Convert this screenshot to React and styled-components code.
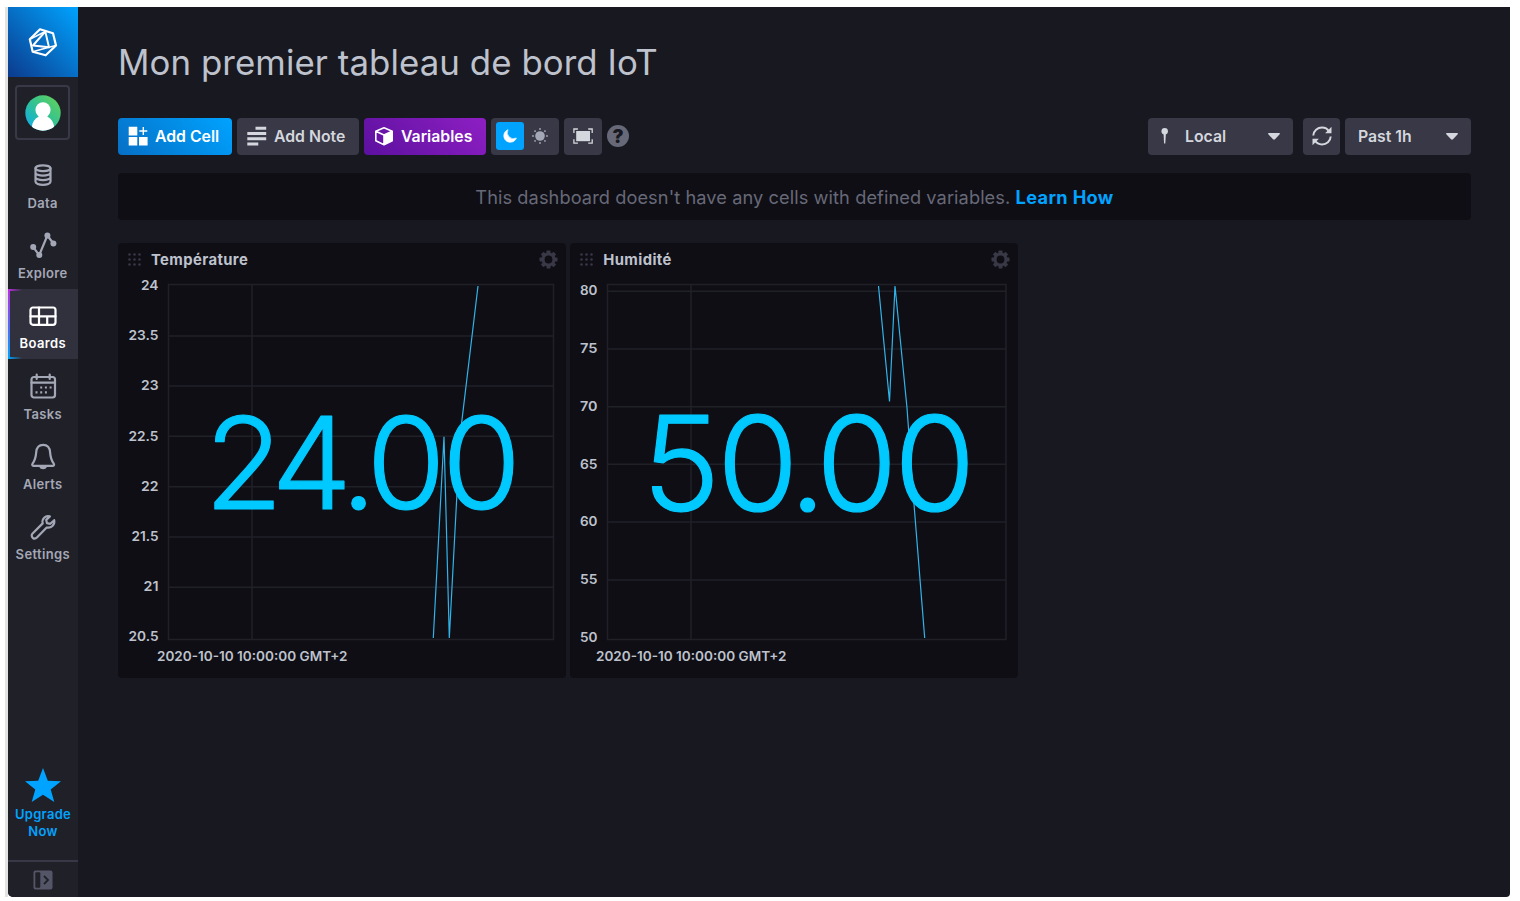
import React from 'react';
import styled, { createGlobalStyle, css } from 'styled-components';

const GlobalStyle = createGlobalStyle`
  * { box-sizing: border-box; }
  body { margin: 0; background: #fff; font-family: Inter, Roboto, "Liberation Sans", sans-serif; }
  svg { display: block; flex: none; }
`;

const Page = styled.div`
  height: 901px;
  padding: 7px 10px 4px 5px;
  overflow: hidden;
`;

const Frame = styled.div`
  display: flex;
  height: 890px;
  border-left: 3px solid #b4b4b6;
  border-image: linear-gradient(90deg, #e3e3e1, #c4c4c2 60%, #77777b) 1;
`;

const Shell = styled.div`
  display: flex;
  flex: 1;
  background: #181820;
  border-radius: 0 0 4px 5px;
  overflow: hidden;
`;

const Sidebar = styled.nav`
  display: flex;
  flex-direction: column;
  align-items: center;
  width: 70px;
  background: #202028;
`;

const Logo = styled.div`
  display: flex;
  align-items: center;
  justify-content: center;
  width: 70px;
  height: 70px;
  color: #fff;
  background: linear-gradient(45deg, #0b3a8d 0%, #066fc5 50%, #00a3ff 100%);
`;

const AvatarBox = styled.div`
  display: flex;
  align-items: center;
  justify-content: center;
  width: 55px;
  height: 55px;
  margin: 8px 1px 8px 0;
  border: 2px solid #383846;
  border-radius: 4px;
`;

const NavItem = styled.a`
  position: relative;
  display: flex;
  flex-direction: column;
  align-items: center;
  width: 70px;
  height: 70.35px;
  padding-top: 13px;
  padding-right: 0.5px;
  color: ${p => (p.$active ? '#fff' : '#a4a8b6')};
  background: ${p => (p.$active ? '#31313d' : 'transparent')};
  ${p => p.$active && css`
    &::before, &::after {
      content: '';
      position: absolute;
      left: 0;
      width: 14px;
      height: 2.5px;
    }
    &::before { top: 0; background: linear-gradient(90deg, #be2ee4, transparent); }
    &::after { bottom: 0; background: linear-gradient(90deg, #00a3ff, transparent); }
  `}
`;

const ActiveEdge = styled.span`
  position: absolute;
  left: 0;
  top: 0;
  width: 2px;
  height: 100%;
  background: linear-gradient(180deg, #be2ee4, #5a67f5 50%, #00a3ff);
`;

const NavLabel = styled.span`
  margin-top: 5.5px;
  font-size: 13px;
  font-weight: 600;
  line-height: 16px;
  letter-spacing: 0.35px;
`;

const Upgrade = styled.div`
  display: flex;
  flex-direction: column;
  align-items: center;
  gap: 2px;
  margin: auto 0 20px 0;
  color: #00a3ff;
  font-size: 13px;
  font-weight: 600;
  line-height: 17px;
  letter-spacing: 0.3px;
  text-align: center;
`;

const Collapse = styled.div`
  display: flex;
  justify-content: center;
  width: 70px;
  height: 37px;
  padding-top: 8px;
  padding-right: 1px;
  border-top: 2px solid #383846;
`;

const Main = styled.main`
  flex: 1;
  padding: 0 39px 0 40px;
`;

const Title = styled.h1`
  margin: 0;
  padding-top: 33px;
  height: 110.5px;
  color: #bec2cc;
  font-size: 34.8px;
  font-weight: 400;
  line-height: 44px;
  letter-spacing: 0.08px;
  white-space: nowrap;
`;

const Toolbar = styled.div`
  display: flex;
  align-items: center;
  gap: 5px;
  height: 37.5px;
`;

const Spacer = styled.div`
  flex: 1;
`;

const fills = {
  primary: 'linear-gradient(45deg, #066fc5, #00a3ff)',
  secondary: 'linear-gradient(45deg, #5c109f, #8e1fc3)',
  plain: '#383846',
};

const Button = styled.button`
  display: flex;
  align-items: center;
  width: ${p => p.$w}px;
  height: 37.5px;
  margin: 0 ${p => p.$after || 0}px 0 0;
  padding: 0 0 0 10px;
  border: 0;
  border-radius: 4px;
  color: ${p => (p.$kind ? '#fff' : '#d4d7dd')};
  background: ${p => fills[p.$kind || 'plain']};
  font: 600 15.8px/37px Inter, Roboto, "Liberation Sans", sans-serif;
  letter-spacing: ${p => p.$ls || 0}px;
  white-space: nowrap;
`;

const ButtonText = styled.span`
  margin-left: ${p => p.$gap}px;
`;

const Caret = styled.svg.attrs({ width: 12, height: 7, viewBox: '0 0 12 7' })`
  margin-left: auto;
  margin-right: 13px;
  fill: #d4d7dd;
`;

const Toggle = styled.div`
  display: flex;
  align-items: center;
  width: 68px;
  height: 37.5px;
  padding: 5px;
  gap: 2px;
  border-radius: 4px;
  background: #383846;
`;

const ToggleOption = styled.div`
  display: flex;
  align-items: center;
  justify-content: center;
  width: 28px;
  height: 28px;
  border-radius: 3px;
  background: ${p => (p.$active ? '#00a3ff' : 'transparent')};
`;

const IconButton = styled(Button)`
  justify-content: center;
  padding: 0;
`;

const Help = styled.div`
  width: 22px;
  height: 22px;
  border-radius: 50%;
  background: #676978;
  color: #181820;
  font-size: 18.5px;
  font-weight: 900;
  line-height: 22px;
  text-align: center;
`;

const Notice = styled.div`
  height: 47px;
  margin-top: 18px;
  border-radius: 4px;
  background: #0f0e15;
  color: #676978;
  font-size: 18.2px;
  line-height: 48px;
  letter-spacing: 0.09px;
  text-align: center;
  white-space: nowrap;
`;

const NoticeLink = styled.a`
  color: #00a3ff;
  font-weight: 700;
  letter-spacing: 0.35px;
`;

const Grid = styled.div`
  display: flex;
  gap: 4.7px;
  margin-top: 23px;
`;

const Cell = styled.section`
  width: 447.6px;
  height: 435px;
  border-radius: 4px;
  background: #0f0e15;
`;

const CellHeader = styled.header`
  display: flex;
  align-items: center;
  height: 33.5px;
  padding: 0 7.5px 0 10px;
`;

const CellName = styled.h2`
  flex: 1;
  margin: 1px 0 0 10px;
  color: #bec2cc;
  font-size: 14.8px;
  font-weight: 700;
  letter-spacing: 0.4px;
`;

const ChartArea = styled.div`
  padding-top: 0.5px;
`;

const Axis = styled.text`
  fill: #bec2cc;
  font: 600 13px Inter, Roboto, "Liberation Sans", sans-serif;
`;

const Stat = styled.text`
  fill: #00c9ff;
  stroke: #00c9ff;
  stroke-width: 1.2px;
  stroke-linejoin: round;
  font: 300 ${p => p.$size}px Inter, Roboto, sans-serif;
`;

const LogoIcon = () => (
  <svg width="30" height="30" viewBox="0 0 30 30" fill="none" stroke="#fff" strokeWidth="2.200" strokeLinejoin="round">
    <path d="M12 2.300L25 6.300 28 18.500 17.700 28.300 4.700 24.800 1.800 12.300z" />
    <path d="M17.300 4.500L5 18.500 21 20.300z" strokeWidth="1.900" />
    <path d="M1.800 12.300L17.300 4.500M21 20.300l7-1.800M21 20.300L4.700 24.800" strokeWidth="1.500" />
  </svg>
);

const AvatarIcon = () => (
  <svg width="36" height="36" viewBox="0 0 36 36">
    <defs>
      <linearGradient id="avatar" x1="0" y1="1" x2="1" y2="0">
        <stop offset="0.1" stopColor="#12b0e2" />
        <stop offset="0.5" stopColor="#32c292" />
        <stop offset="0.9" stopColor="#5fd060" />
      </linearGradient>
      <clipPath id="avatarClip"><circle cx="18" cy="18" r="17.7" /></clipPath>
    </defs>
    <circle cx="18" cy="18" r="17.7" fill="url(#avatar)" />
    <g fill="#fff" clipPath="url(#avatarClip)">
      <circle cx="18" cy="14.8" r="7.6" />
      <path d="M13.500 19.500h9v2.200c4 1.800 6 5.500 6.500 9.300v5H7v-5c.5-3.800 2.500-7.500 6.500-9.300z" />
    </g>
  </svg>
);

const line = { fill: 'none', stroke: 'currentColor', strokeWidth: 2.2, strokeLinecap: 'round', strokeLinejoin: 'round' };

const DataIcon = () => (
  <svg width="28" height="28" viewBox="0 0 28 28" {...line}>
    <ellipse cx="14" cy="7.200" rx="7.500" ry="2.900" />
    <path d="M6.500 7.200v13.600c0 1.600 3.400 3 7.500 3s7.500-1.400 7.500-3V7.200M6.500 11.700c0 1.600 3.400 2.900 7.500 2.900s7.500-1.300 7.500-2.900M6.500 16.200c0 1.600 3.400 2.900 7.500 2.900s7.500-1.300 7.500-2.900" />
  </svg>
);

const ExploreIcon = () => (
  <svg width="28" height="28" viewBox="0 0 28 28" {...line}>
    <path d="M4.200 16.200l6 8L18.400 4.500l6 8" />
    <g fill="currentColor" stroke="none">
      <circle cx="4.200" cy="16" r="3" /><circle cx="10.300" cy="24" r="3" />
      <circle cx="18.400" cy="4.500" r="3" /><circle cx="24.400" cy="12.500" r="3" />
    </g>
  </svg>
);

const BoardsIcon = () => (
  <svg width="28" height="28" viewBox="0 0 28 28" {...line}>
    <rect x="1.500" y="5.500" width="25" height="17.300" rx="2.500" />
    <path d="M1.500 14.300h25M10 5.700v8.600M10 14.300V23M18.200 14.300V23" />
  </svg>
);

const TasksIcon = () => (
  <svg width="28" height="28" viewBox="0 0 28 28" {...line}>
    <rect x="2.500" y="5" width="23.500" height="20.500" rx="2.500" />
    <path d="M2.500 10.700H26M7.700 2.500v4.500M20.700 2.500v4.500" />
    <path strokeLinecap="butt" d="M11.200 15.500h12M6.500 20.300h12" strokeDasharray="2 2.700" />
  </svg>
);

const AlertsIcon = () => (
  <svg width="28" height="28" viewBox="0 0 28 28" {...line}>
    <path d="M14.200 2.800c-4.700 0-6.700 3.400-7 7.500-.4 5.600-1 7.600-3.500 11-.9 1.300-.6 2.500.8 2.500h19.300c1.400 0 1.700-1.200.8-2.500-2.500-3.400-3.100-5.400-3.500-11-.3-4.100-2.300-7.500-6.900-7.500z" />
    <path d="M11.500 25h5.200c-.5 1.500-4.700 1.500-5.200 0z" />
  </svg>
);

const SettingsIcon = () => (
  <svg width="28" height="28" viewBox="0 0 28 28" {...line}>
    <path d="M20.900 3.400c-4.600-1.200-8.300 2.300-7.200 7L3.600 20.500c-1.500 1.500-.9 3.600.3 4.500 1.300.9 2.900.6 4-.5l9.800-10c4.400.9 8.400-2.500 7.500-7.300l-3.900 3.600-3.300-.6-.8-3.300z" />
  </svg>
);

const GearIcon = () => (
  <svg width="19" height="19" viewBox="-9.500 -9.500 19 19">
    <g fill="#383846">
      {[0, 45, 90, 135].map(a => <rect key={a} x="-2" y="-9" width="4" height="18" rx="0.800" transform={`rotate(${a})`} />)}
      <circle r="7" />
    </g>
    <circle r="3.900" fill="#0f0e15" />
  </svg>
);

const Grip = () => (
  <svg width="13" height="14" viewBox="0 0 13 14" fill="#383846">
    {[1.500, 6.500, 11.500].map(x => [1.500, 6.500, 11.500].map(y => <circle key={`${x}-${y}`} cx={x} cy={y} r="1.300" />))}
  </svg>
);

const navItems = [
  { label: 'Data', Icon: DataIcon },
  { label: 'Explore', Icon: ExploreIcon },
  { label: 'Boards', Icon: BoardsIcon, active: true },
  { label: 'Tasks', Icon: TasksIcon },
  { label: 'Alerts', Icon: AlertsIcon },
  { label: 'Settings', Icon: SettingsIcon },
];

const charts = [
  {
    name: 'Température',
    left: 50.5, right: 435.500, tick: 134, stampX: 39,
    rows: [[null, '24', 12.500], [59, '23.5', 63], [109, '23', 113], [159.300, '22.5', 163.500], [209.700, '22', 213.500], [260, '21.5', 263.800], [310.200, '21', 314], [null, '20.5', 364]],
    points: '315.3,361 326,159.700 331.300,361 342,159.500 360,9',
    stat: [['2', 86.500], ['4', 153.500], ['.', 222.500], ['0', 248.500], ['0', 324]],
    size: 128, base: 231.800,
  },
  {
    name: 'Humidité',
    left: 37.5, right: 436, tick: 121, stampX: 26,
    rows: [[14.300, '80', 18.300], [72, '75', 76], [129.700, '70', 133.700], [187.300, '65', 191.700], [245, '60', 249.300], [303, '55', 306.500], [null, '50', 364.500]],
    points: '308.500,9 319.500,124.500 325,9 337,131 344.300,231 354.700,361',
    stat: [['5', 72], ['0', 147], ['.', 219], ['0', 246], ['0', 324]],
    size: 132, base: 233.500,
  },
];

function Chart({ data }) {
  return (
    <svg width="447" height="401" viewBox="0 0 447 401">
      <g stroke="#202028" strokeWidth="1.500" fill="none">
        <rect x={data.left} y="7.500" width={data.right - data.left} height="355" />
        <path d={`M${data.tick} 7.500V362.500`} />
        {data.rows.filter(r => r[0]).map(r => <path key={r[1]} d={`M${data.left} ${r[0]}H${data.right}`} />)}
      </g>
      {data.rows.map(r => (
        <Axis
          key={r[1]}
          x={data.left - 10}
          y={r[2]}
          textAnchor="end"
          lengthAdjust="spacingAndGlyphs"
          textLength={{ 24: 17.5, 23: 17.5, 22: 17.5, 21: 15, 21.5: 27 }[r[1]] || (r[1].length === 4 ? 30 : 17.5)}
        >
          {r[1]}
        </Axis>
      ))}
      <Axis x={data.stampX} y="384" textLength="190.500" lengthAdjust="spacingAndGlyphs">2020-10-10 10:00:00 GMT+2</Axis>
      <polyline points={data.points} fill="none" stroke="#31b4ea" strokeWidth="1.200" />
      <Stat $size={data.size} y={data.base} x={data.stat.map(s => s[1]).join(' ')}>{data.stat.map(s => s[0]).join('')}</Stat>
    </svg>
  );
}

export default function App() {
  return (
    <Page>
      <GlobalStyle />
      <Frame>
        <Shell>
          <Sidebar>
            <Logo><LogoIcon /></Logo>
            <AvatarBox><AvatarIcon /></AvatarBox>
            {navItems.map(({ label, Icon, active }) => (
              <NavItem key={label} $active={active}>
                {active && <ActiveEdge />}
                <Icon />
                <NavLabel>{label}</NavLabel>
              </NavItem>
            ))}
            <Upgrade>
              <svg width="36" height="36" viewBox="0 0 36 36" fill="currentColor">
                <path d="M18 0l4.800 12.700L36 13.200 25.700 21.500 29.300 34 18 26.800 6.700 34l3.600-12.500L0 13.200l13.200-.5z" />
              </svg>
              <span>Upgrade<br />Now</span>
            </Upgrade>
            <Collapse>
              <svg width="20" height="20" viewBox="0 0 20 20">
                <rect x="0.500" y="0.500" width="19" height="19" rx="2" fill="#545667" />
                <rect x="2.300" y="2.300" width="5" height="15.400" rx="1" fill="#202028" />
                <path d="M11 6l4 4-4 4" fill="none" stroke="#202028" strokeWidth="1.800" />
              </svg>
            </Collapse>
          </Sidebar>
          <Main>
            <Title>Mon premier tableau de bord IoT</Title>
            <Toolbar>
              <Button $w={114} $kind="primary">
                <svg width="20" height="20" viewBox="0 0 20 20" fill="#fff">
                  <path d="M.7.800h8.600v8.600H.7zM.7 11h8.600v8.600H.7zM11 11h8.600v8.600H11zM14.600 1h1.400v8h-1.400zM11.300 4.300h8v1.400h-8z" />
                </svg>
                <ButtonText $gap={7}>Add Cell</ButtonText>
              </Button>
              <Button $w={122}>
                <svg width="20" height="20" viewBox="0 0 20 20" fill="currentColor">
                  <path d="M8.500.800h10.700v3H8.500zM.3 6h18.900v3H.3zM.3 11.300h18.900v3H.3zM.3 16.500h11v3H.3z" />
                </svg>
                <ButtonText $gap={7}>Add Note</ButtonText>
              </Button>
              <Button $w={122} $kind="secondary">
                <svg width="20" height="20" viewBox="0 0 20 20">
                  <path d="M10 1.700l8.200 3.500v9.600L10 18.700l-8.200-3.900V5.200zM1.800 5.200L10 9l8.200-3.800M10 9v9.700" fill="none" stroke="#fff" strokeWidth="1.600" strokeLinejoin="round" />
                  <path d="M10 9l8.200-3.800v9.600L10 18.700z" fill="#fff" />
                </svg>
                <ButtonText $gap={7}>Variables</ButtonText>
              </Button>
              <Toggle>
                <ToggleOption $active>
                  <svg width="14" height="14" viewBox="0 0 14 14"><path d="M5 .700A6.500 6.500 0 1 0 13.400 9 6.200 6.200 0 0 1 5 .700z" fill="#fff" stroke="#fff" strokeWidth="0.600" /></svg>
                </ToggleOption>
                <ToggleOption>
                  <svg width="16" height="16" viewBox="-8 -8 16 16" fill="#a4a8b6">
                    <circle r="4.800" />
                    {[0, 45, 90, 135, 180, 225, 270, 315].map(a => <circle key={a} cy="-7" r="0.900" transform={`rotate(${a})`} />)}
                  </svg>
                </ToggleOption>
              </Toggle>
              <IconButton $w={38}>
                <svg width="20" height="16" viewBox="0 0 20 16">
                  <rect x="3.200" y="3" width="13.800" height="10.200" fill="#d4d7dd" />
                  <path d="M.9 5V1h4M15.200 1h4v4M19.200 11.200v4h-4M4.900 15.200h-4v-4" fill="none" stroke="#d4d7dd" strokeWidth="1.300" />
                </svg>
              </IconButton>
              <Help>?</Help>
              <Spacer />
              <Button $w={145} $after={5}>
                <svg width="13" height="18" viewBox="0 0 13 18" fill="currentColor"><circle cx="6.700" cy="4.200" r="3.200" /><path d="M5.500 6h2.400l-.6 10.500h-1.200z" /></svg>
                <ButtonText $gap={14}>Local</ButtonText>
                <Caret><path d="M.8 0h10.400c.8 0 1 .7.500 1.200L7 6.300c-.6.600-1.400.6-2 0L.3 1.200C-.2.700 0 0 .8 0z" /></Caret>
              </Button>
              <IconButton $w={37}>
                <svg width="20" height="20" viewBox="0 0 20 20" fill="none" stroke="#d4d7dd" strokeWidth="2">
                  <path d="M1.300 9.500C1.600 4.800 5.500 1.600 10 1.600c3.100 0 5.600 1.500 7 3.900M18.700 10.500c-.3 4.700-4.200 7.900-8.700 7.900-3.100 0-5.600-1.500-7-3.900" />
                  <path d="M19.500.800v6.400h-6.400zM.5 19.200v-6.400h6.400z" fill="#d4d7dd" stroke="none" />
                </svg>
              </IconButton>
              <Button $w={126}>
                <ButtonText $gap={3}>Past 1h</ButtonText>
                <Caret><path d="M.8 0h10.400c.8 0 1 .7.500 1.200L7 6.300c-.6.600-1.400.6-2 0L.3 1.200C-.2.700 0 0 .8 0z" /></Caret>
              </Button>
            </Toolbar>
            <Notice>This dashboard doesn't have any cells with defined variables. <NoticeLink>Learn How</NoticeLink></Notice>
            <Grid>
              {charts.map(c => (
                <Cell key={c.name}>
                  <CellHeader>
                    <Grip />
                    <CellName>{c.name}</CellName>
                    <GearIcon />
                  </CellHeader>
                  <ChartArea><Chart data={c} /></ChartArea>
                </Cell>
              ))}
            </Grid>
          </Main>
        </Shell>
      </Frame>
    </Page>
  );
}
